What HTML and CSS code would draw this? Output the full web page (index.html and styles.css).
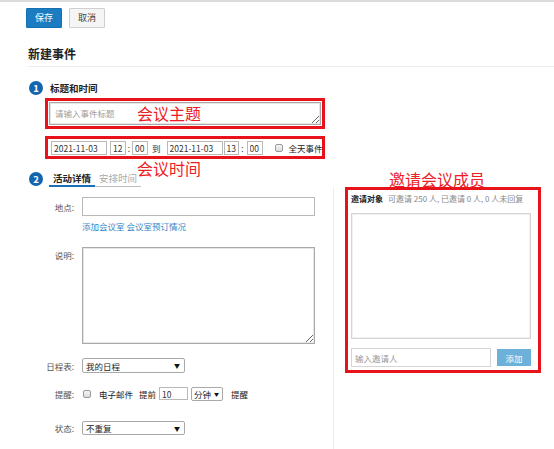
FILE: index.html
```html
<!DOCTYPE html>
<html lang="zh-CN">
<head>
<meta charset="utf-8">
<title>新建事件</title>
<link rel="stylesheet" href="styles.css">
</head>
<body>
<div class="page">
  <div class="toolbar">
    <button class="btn btn-primary">保存</button>
    <button class="btn">取消</button>
  </div>
  <h1 class="title">新建事件</h1>
  <div class="rule"></div>

  <div class="step-head">
    <span class="num">1</span>
    <span class="step-title">标题和时间</span>
  </div>
  <div class="mark mark-subject">
    <textarea class="subject" placeholder="请输入事件标题"></textarea>
    <span class="note note-subject">会议主题</span>
  </div>
  <div class="mark mark-time">
    <input class="inp date" value="2021-11-03">
    <input class="inp hour" value="12">
    <span class="colon">:</span>
    <input class="inp minute" value="00">
    <span class="to">到</span>
    <input class="inp date" value="2021-11-03">
    <input class="inp hour hour2" value="13">
    <span class="colon colon2">:</span>
    <input class="inp minute" value="00">
    <span class="check check-allday"></span>
    <span class="allday">全天事件</span>
    <span class="note note-time">会议时间</span>
  </div>

  <div class="step2">
    <div class="left">
      <div class="step-head step-head2">
        <span class="num">2</span>
        <div class="tabs">
          <span class="tab active">活动详情</span>
          <span class="tab">安排时间</span>
        </div>
      </div>
      <div class="form">
        <div class="row row-place">
          <span class="label">地点:</span>
          <input class="inp field">
        </div>
        <div class="row row-link">
          <span></span>
          <span class="links"><a>添加会议室</a> <a>会议室预订情况</a></span>
        </div>
        <div class="row row-desc">
          <span class="label label-top">说明:</span>
          <textarea class="desc"></textarea>
        </div>
        <div class="row row-cal">
          <span class="label">日程表:</span>
          <div class="select sel-wide"><span>我的日程</span><span class="arrow">▼</span></div>
        </div>
        <div class="row row-remind">
          <span class="label">提醒:</span>
          <div class="remind">
            <span class="check"></span>
            <span class="r-mail">电子邮件</span>
            <span class="r-before">提前</span>
            <input class="inp r-num" value="10">
            <div class="select sel-unit"><span>分钟</span><span class="arrow">▼</span></div>
            <span class="r-end">提醒</span>
          </div>
        </div>
        <div class="row row-state">
          <span class="label">状态:</span>
          <div class="select sel-wide"><span>不重复</span><span class="arrow">▼</span></div>
        </div>
      </div>
    </div>

    <div class="right">
      <div class="mark mark-invite">
        <span class="note note-invite">邀请会议成员</span>
        <div class="inv-head"><b>邀请对象</b><span class="inv-stat">可邀请 250 人, 已邀请 0 人, 0 人未回复</span></div>
        <div class="inv-list"></div>
        <div class="inv-add">
          <input class="inp inv-input" placeholder="输入邀请人">
          <button class="btn-add">添加</button>
        </div>
      </div>
    </div>
  </div>
</div>
</body>
</html>
```

FILE: styles.css
```css
* { box-sizing: border-box; }

html, body {
  margin: 0;
  background: #ffffff;
}

body {
  border-top: 2px solid #dcdcdc;
  font-family: "Noto Sans CJK SC", "Microsoft YaHei", sans-serif;
  font-size: 8.5px;
  color: #333333;
  height: 449px;
  overflow: hidden;
}

.page {
  padding-left: 26px;
}

.toolbar {
  display: flex;
  gap: 7px;
  padding-top: 6px;
}

.btn {
  height: 20px;
  padding: 0 8px;
  font-family: inherit;
  font-size: 9px;
  line-height: 18px;
  border: 1px solid #cfcfcf;
  background: #f5f5f5;
  color: #444;
  border-radius: 1px;
}

.btn-primary {
  width: 36px;
  background: #1b7cc1;
  border-color: #1570b0;
  color: #ffffff;
}

.title {
  margin: 16px 0 0 2px;
  font-size: 12px;
  line-height: 20px;
  font-weight: bold;
  color: #222;
}

.rule {
  margin: 2px 0 0 2px;
  height: 1px;
  background: #ececec;
}

.step-head {
  display: flex;
  align-items: center;
  margin: 14px 0 0 3px;
  height: 14px;
}

.num {
  width: 14px;
  height: 14px;
  border-radius: 50%;
  background: #1465b0;
  color: #fff;
  font-size: 9.5px;
  font-weight: bold;
  line-height: 14px;
  text-align: center;
}

.step-title {
  margin-left: 7px;
  font-size: 9.5px;
  font-weight: bold;
  color: #222;
}

.mark {
  position: relative;
  border: 3px solid #e8121b;
}

.note {
  position: absolute;
  font-size: 16px;
  line-height: 20px;
  color: #ee1c24;
  white-space: nowrap;
}

.mark-subject {
  margin: 3px 0 0 19px;
  width: 280px;
  padding: 1px;
}

.subject {
  display: block;
  width: 272px;
  height: 23px;
  border: 1px solid #a9a9a9;
  box-shadow: inset 0 0 0 1px #e6e6e6;
  padding: 4px 5px;
  font-family: inherit;
  font-size: 8.5px;
  resize: both;
  outline: none;
}

.subject::placeholder { color: #a0a0a0; }

.note-subject {
  left: 89px;
  top: 2px;
}

.mark-time {
  display: flex;
  align-items: center;
  margin: 7px 0 0 19px;
  width: 280px;
  height: 23px;
  padding: 1px 0 0 3px;
  white-space: nowrap;
}

.mark-time > * { flex-shrink: 0; }

.inp {
  height: 14px;
  border: 1px solid #b9b9b9;
  padding: 0 2px;
  font-family: inherit;
  font-size: 8.5px;
  color: #333;
  outline: none;
  background: #fff;
}

.date { width: 56px; }
.hour { width: 16px; margin-left: 3px; }
.hour2 { width: 15px; margin-left: 1px; }
.minute { width: 16px; }

.colon {
  width: 6px;
  text-align: center;
}
.colon2 { width: 8px; }

.to {
  margin: 0 6px 0 4px;
}

.check {
  display: inline-block;
  flex-shrink: 0;
  width: 8px;
  height: 8px;
  border: 1px solid #9a9a9a;
  border-radius: 2px;
  background: linear-gradient(#f4f4f4, #dcdcdc);
}

.check-allday { margin-left: 12px; }

.allday {
  margin-left: 6px;
  color: #222;
}

.note-time {
  left: 89px;
  top: 19px;
}

.step2 {
  display: flex;
  align-items: flex-start;
}

.left {
  width: 308px;
}

.step-head2 {
  margin-top: 13px;
  align-items: flex-start;
}

.tabs {
  display: flex;
  margin-left: 6px;
}

.tab {
  padding: 0 4px;
  height: 15px;
  line-height: 13px;
  font-size: 9.5px;
  color: #aaa;
  border-bottom: 1px solid #bdbdbd;
}

.tab.active {
  color: #222;
  font-weight: bold;
  border-bottom: 2px solid #1a6fb9;
}

.form {
  margin-top: 1px;
  padding-top: 10px;
  border-right: 1px solid #ececec;
  height: 270px;
}

.row {
  display: grid;
  grid-template-columns: 48px 1fr;
  column-gap: 8px;
  align-items: center;
}

.label {
  text-align: right;
  color: #555;
  line-height: 12px;
}

.label-top {
  align-self: start;
  margin-top: 2px;
}

.field {
  width: 233px;
  height: 19px;
}

.row-link { margin-top: 5px; }

.links {
  line-height: 11px;
  color: #3487c7;
}

.row-desc { margin-top: 15px; }

.desc {
  display: block;
  width: 233px;
  height: 97px;
  border: 1px solid #a9a9a9;
  box-shadow: inset 0 0 0 1px #e6e6e6;
  resize: both;
  outline: none;
}

.row-cal { margin-top: 14px; }

.select {
  display: flex;
  align-items: center;
  justify-content: space-between;
  height: 15px;
  border: 1px solid #a9a9a9;
  border-radius: 2px;
  padding: 0 4px 0 3px;
  color: #222;
  background: #fff;
}

.sel-wide { width: 103px; }

.arrow {
  font-size: 6px;
  color: #111;
}

.row-remind { margin-top: 14px; }

.remind {
  display: flex;
  align-items: center;
  height: 13px;
  white-space: nowrap;
}

.remind > * { flex-shrink: 0; }

.remind .check { margin-left: 1px; }

.r-mail { margin-left: 8px; color: #222; }
.r-before { margin-left: 6px; color: #222; }

.r-num {
  width: 29px;
  height: 13px;
  margin-left: 3px;
}

.sel-unit {
  width: 32px;
  height: 14px;
  margin-left: 3px;
  padding: 0 3px 0 2px;
}

.sel-unit .arrow { font-size: 5px; }

.r-end { margin-left: 8px; color: #222; }

.row-state { margin-top: 21px; }
.row-state .select { height: 14px; }

.right {
  padding: 28px 0 0 11px;
}

.mark-invite {
  width: 196px;
  height: 186px;
  padding: 3px 8px 3px 3px;
}

.note-invite {
  left: 41px;
  top: -21px;
}

.inv-head {
  line-height: 11px;
  font-size: 8px;
  white-space: nowrap;
}

.inv-head b { color: #222; }

.inv-stat {
  margin-left: 5px;
  color: #888;
}

.inv-list {
  margin-top: 9px;
  width: 180px;
  height: 126px;
  border: 1px solid #d4d4d4;
  box-shadow: inset 0 0 0 1px #f0f0f0;
}

.inv-add {
  display: flex;
  align-items: center;
  justify-content: space-between;
  margin-top: 9px;
  width: 180px;
}

.inv-input {
  width: 140px;
  height: 19px;
  padding: 0 3px;
  border-color: #d4d4d4;
}

.inv-input::placeholder { color: #999; }

.btn-add {
  width: 34px;
  height: 17px;
  border: none;
  background: #6cb1d9;
  color: #fff;
  font-family: inherit;
  font-size: 8.5px;
  padding: 0;
}
```
